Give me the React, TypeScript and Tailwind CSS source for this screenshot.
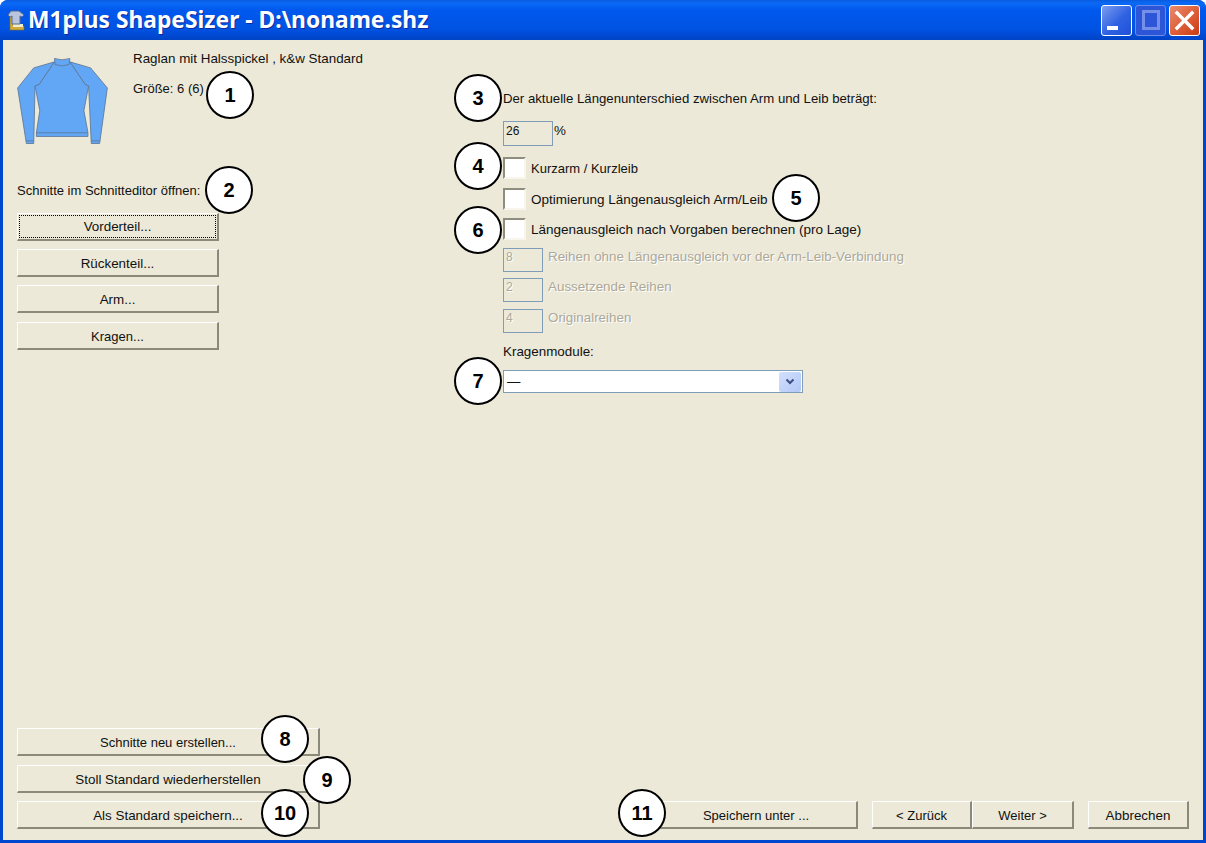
import type { ReactNode } from "react";

const uiFont = "font-['Liberation_Sans',Arial,sans-serif] text-[13.4px] leading-[15px] text-[#111]";

function Callout({ n, className }: { n: number; className: string }) {
  return (
    <div
      className={
        "absolute flex h-[48px] w-[48px] items-center justify-center rounded-full border-2 border-black bg-white text-[20px] font-bold text-black " +
        className
      }
    >
      {n}
    </div>
  );
}

function Btn({ children, className, focus }: { children: ReactNode; className: string; focus?: boolean }) {
  return (
    <button
      className={
        "relative flex h-[28px] items-center justify-center border-t border-l border-t-white border-l-white border-r-2 border-b-2 border-r-[#8b8979] border-b-[#8b8979] bg-[#ece9d8] " +
        className
      }
    >
      {focus && <span className="absolute inset-[1px] border border-dotted border-black" />}
      {children}
    </button>
  );
}

function Check({ label, className }: { label: string; className: string }) {
  return (
    <div className={"flex items-center " + className}>
      <span className="h-[22px] w-[23px] border-2 border-t-[#8f8d7d] border-l-[#8f8d7d] border-r-[#f7f5ec] border-b-[#f7f5ec] bg-white" />
      <span className="ml-[5px]">{label}</span>
    </div>
  );
}

function DisabledField({ value, label, className }: { value: string; label: string; className: string }) {
  return (
    <div className={"flex items-start text-[#aca899] [text-shadow:1px_1px_#fff] " + className}>
      <span className="flex h-[24px] w-[40px] items-center border border-[#7f9db9] pb-[5px] pl-[2px] text-[12px]">{value}</span>
      <span className="ml-[5px] mt-[1px]">{label}</span>
    </div>
  );
}

function ShirtPicture() {
  return (
    <svg width="91" height="88" viewBox="50 170 272 262" className="mt-[5px] shrink-0">
      <g fill="#62a6f6" stroke="#5d7793" strokeWidth="2.5" strokeLinejoin="round">
        <path d="M162 184 L100 202 L52 262 L78 428 L100 428 L104 256 L116 252 Z" />
        <path d="M208 184 L270 202 L320 262 L297 428 L272 428 L264 256 L254 252 Z" />
        <path d="M162 184 L208 184 L254 252 L264 256 L250 330 L262 395 L262 407 L108 407 L108 395 L118 330 L104 256 L116 252 Z" />
        <path d="M162 174 Q185 182 208 174 L206 192 Q185 200 164 192 Z" />
        <path fill="none" d="M108 396 L262 396 M78 420 L100 420 M272 420 L297 420" />
      </g>
    </svg>
  );
}

function AppIcon() {
  return (
    <svg width="22" height="22" viewBox="0 0 22 22" className="shrink-0">
      <path d="M6 6 L9 6 L9 17 L20 17 L20 21 L6 21 Z" fill="#d1ab40" stroke="#8a6d1e" strokeWidth="0.6" />
      <rect x="9" y="15" width="10" height="3" fill="#f1edc8" />
      <path d="M7 2 L15 2 L20 6 L18 8 L16 7 L16 15 L8 15 L8 7 L6 8 L4 6 Z" fill="#b9c5dd" stroke="#5a6a90" strokeWidth="1" />
    </svg>
  );
}

export default function App() {
  return (
    <div className="h-[843px] w-[1206px] overflow-hidden bg-white">
      <div className={"flex h-full flex-col rounded-t-[8px] bg-[#0047d0] " + uiFont}>
        {/* title bar */}
        <div className="flex h-[40px] shrink-0 items-center rounded-t-[8px] bg-[linear-gradient(to_bottom,#0a5ae0_0%,#0a6af5_8%,#0058ee_25%,#0054e3_70%,#0048d2_90%,#0042c4_100%)] pl-[4px] pr-[6px]">
          <AppIcon />
          <span className="ml-[2px] font-['Noto_Sans',sans-serif] text-[22.8px] font-bold leading-[30px] text-white [text-shadow:1px_1px_#0f2a9e]">
            M1plus ShapeSizer - D:\noname.shz
          </span>
          <div className="ml-auto flex gap-[3px]">
            <div className="flex h-[31px] w-[31px] items-end rounded-[3px] border border-white bg-[linear-gradient(135deg,#7c9df0,#2f62e2_55%,#1f4fd8)] pb-[5px] pl-[5px]">
              <span className="h-[4px] w-[11px] bg-white" />
            </div>
            <div className="flex h-[31px] w-[31px] items-center justify-center rounded-[3px] border border-[#6d8ee8] bg-[#2c55d8]">
              <span className="h-[20px] w-[18px] border-[3px] border-[#7490e8]" />
            </div>
            <div className="flex h-[31px] w-[31px] items-center justify-center rounded-[3px] border border-white bg-[linear-gradient(135deg,#e98b6e,#dd5d38_55%,#c93c12)]">
              <svg width="21" height="21" viewBox="0 0 21 21">
                <path d="M3 3 L18 18 M18 3 L3 18" stroke="#fff" strokeWidth="3.4" strokeLinecap="square" />
              </svg>
            </div>
          </div>
        </div>

        {/* client area */}
        <div className="relative mx-[3px] mb-[3px] flex flex-1 flex-col bg-[#ece9d8]">
          <div className="flex flex-1">
            <div className="w-[500px] shrink-0 pl-[14px]">
              <div className="flex items-start pt-[12px]">
                <ShirtPicture />
                <div className="ml-[25px] -mt-[1px]">
                  <div>Raglan mit Halsspickel , k&amp;w Standard</div>
                  <div className="mt-[15px] text-[13px]">Größe: 6 (6)</div>
                </div>
              </div>
              <div className="mt-[38px] text-[13px]">Schnitte im Schnitteditor öffnen:</div>
              <div className="mt-[15px] flex w-[202px] flex-col gap-[8px]">
                <Btn className="w-full" focus>Vorderteil...</Btn>
                <Btn className="w-full pt-[1px]">Rückenteil...</Btn>
                <Btn className="w-full pt-[1px]">Arm...</Btn>
                <Btn className="mt-[1px] w-full pt-[1px] text-[13px]">Kragen...</Btn>
              </div>
            </div>

            <div className="flex-1 pt-[51px]">
              <div className="text-[13.2px]">Der aktuelle Längenunterschied zwischen Arm und Leib beträgt:</div>
              <div className="mt-[15px] flex items-start">
                <span className="flex h-[25px] w-[50px] items-center border border-[#7f9db9] pb-[4px] pl-[2px] text-[12px]">26</span>
                <span className="ml-[1px] mt-[2px]">%</span>
              </div>
              <Check className="mt-[11px] text-[13px]" label="Kurzarm / Kurzleib" />
              <Check className="mt-[9px] text-[13.5px]" label="Optimierung Längenausgleich Arm/Leib" />
              <Check className="mt-[8px] text-[13.5px]" label="Längenausgleich nach Vorgaben berechnen (pro Lage)" />
              <DisabledField className="mt-[8px]" value="8" label="Reihen ohne Längenausgleich vor der Arm-Leib-Verbindung" />
              <DisabledField className="mt-[6px]" value="2" label="Aussetzende Reihen" />
              <DisabledField className="mt-[7px]" value="4" label="Originalreihen" />
              <div className="mt-[11px]">Kragenmodule:</div>
              <div className="mt-[11px] flex h-[23px] w-[300px] items-center justify-between border border-[#7f9db9] bg-white pl-[3px] pr-[1px]">
                <span>—</span>
                <span className="flex h-[20px] w-[22px] items-center justify-center rounded-[2px] bg-[linear-gradient(135deg,#d3e0fd,#b2c7f6)]">
                  <svg width="10" height="8" viewBox="0 0 10 8">
                    <path d="M1.5 1.5 L5 5 L8.5 1.5" fill="none" stroke="#3a4d84" strokeWidth="2" />
                  </svg>
                </span>
              </div>
            </div>
          </div>

          {/* bottom buttons */}
          <div className="flex items-end pb-[11px] pl-[14px] pr-[14px]">
            <div className="flex w-[303px] flex-col gap-[8px]">
              <Btn className="w-full pt-[1px] text-[13px]">Schnitte neu erstellen...</Btn>
              <Btn className="mt-[1px] w-full pt-[1px]">Stoll Standard wiederherstellen</Btn>
              <Btn className="w-full pt-[1px]">Als Standard speichern...</Btn>
            </div>
            <div className="ml-auto flex">
              <Btn className="mr-[14px] w-[203px] pt-[1px] text-[13px]">Speichern unter ...</Btn>
              <Btn className="w-[100px] pt-[1px] text-[13px]">&lt; Zurück</Btn>
              <Btn className="mr-[14px] w-[102px] pt-[1px] text-[13px]">Weiter &gt;</Btn>
              <Btn className="w-[101px] pt-[1px]">Abbrechen</Btn>
            </div>
          </div>

          <Callout n={1} className="left-[203px] top-[31px]" />
          <Callout n={2} className="left-[202px] top-[126px]" />
          <Callout n={3} className="left-[451px] top-[34px]" />
          <Callout n={4} className="left-[451px] top-[102px]" />
          <Callout n={5} className="left-[769px] top-[134px]" />
          <Callout n={6} className="left-[451px] top-[166px]" />
          <Callout n={7} className="left-[451px] top-[317px]" />
          <Callout n={8} className="left-[258px] top-[675px]" />
          <Callout n={9} className="left-[300px] top-[716px]" />
          <Callout n={10} className="left-[258px] top-[749px]" />
          <Callout n={11} className="left-[615px] top-[749px]" />
        </div>
      </div>
    </div>
  );
}
